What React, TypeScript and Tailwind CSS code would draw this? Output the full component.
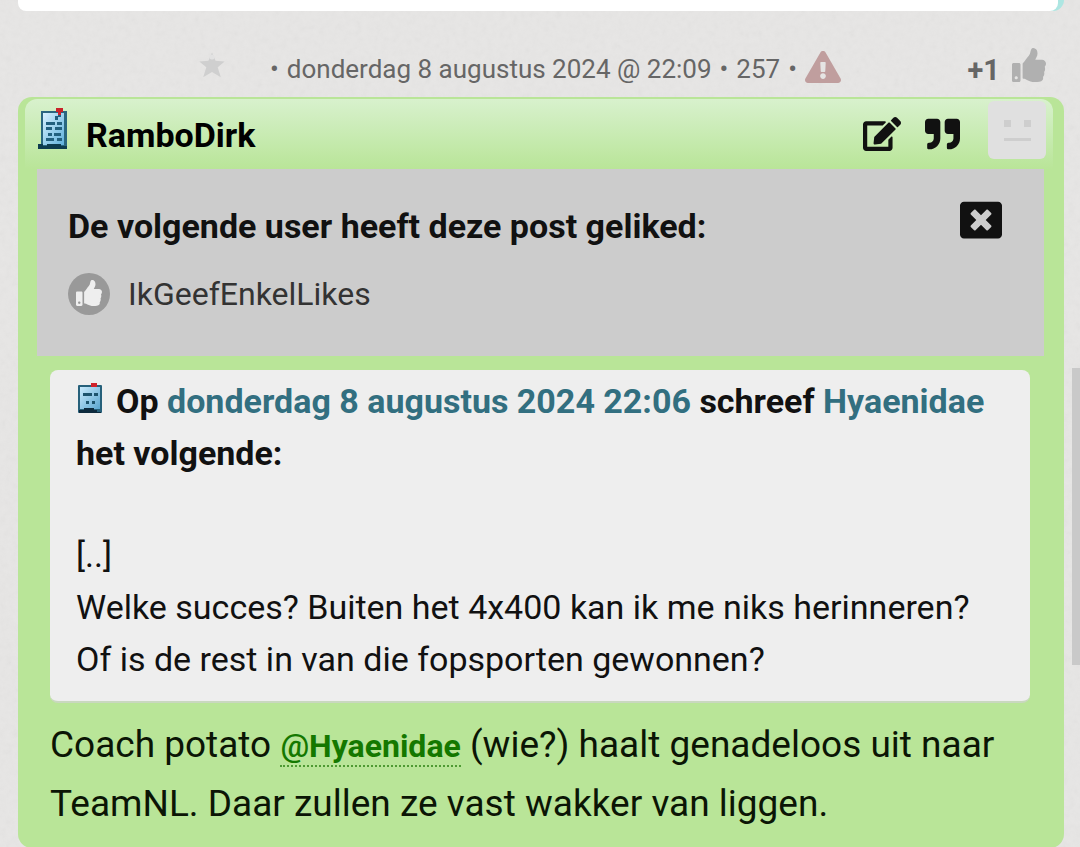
import type { ReactNode } from "react";
import {
  FaEdit,
  FaExclamationTriangle,
  FaQuoteRight,
  FaThumbsUp,
  FaWindowClose,
} from "react-icons/fa";

const POST = {
  author: "RamboDirk",
  date: "donderdag 8 augustus 2024 @ 22:09",
  number: 257,
  likes: 1,
  likedBy: ["IkGeefEnkelLikes"],
};

export default function App() {
  return (
    <div className="relative isolate min-h-screen overflow-hidden bg-[#e7e6e5] font-[Roboto,sans-serif] text-[#111]">
      <PaperTexture />
      <main className="pr-4 pl-[18px]">
        <PreviousPost />
        <PostMeta />
        <article className="rounded-[14px] bg-[#b9e598] pt-[2px] pb-4">
          <PostHeader />
          <LikedBy />
          <div className="pt-[14px] pr-[34px] pl-8">
            <Quote />
            <p className="pt-[13px] text-[37px] leading-[57px] text-[#0b1505]">
              Coach potato <Mention name="Hyaenidae" /> (wie?) haalt genadeloos
              uit naar TeamNL. Daar zullen ze vast wakker van liggen.
            </p>
          </div>
        </article>
      </main>
      <div className="absolute top-[368px] right-0 h-[297px] w-2 bg-[#c9c9c9]" />
    </div>
  );
}

const PaperTexture = () => (
  <svg className="absolute inset-0 -z-10 h-full w-full opacity-[0.07]" aria-hidden="true">
    <filter id="paper">
      <feTurbulence type="fractalNoise" baseFrequency="0.16" numOctaves="3" />
      <feColorMatrix type="saturate" values="0" />
    </filter>
    <rect width="100%" height="100%" filter="url(#paper)" />
  </svg>
);

const PreviousPost = () => (
  <div className="rounded-b-[14px] bg-[#ade6e2] pr-[6px]">
    <div className="h-[11px] rounded-b-lg bg-white" />
  </div>
);

const PostMeta = () => (
  <div className="flex h-[86px] items-center pt-[30px] pr-[18px] pl-[180px] text-[26px] text-[#666]">
    <button type="button" aria-label="Bladwijzer" className="pb-2">
      <StarIcon />
    </button>
    <p className="ml-11 flex items-center gap-2 whitespace-nowrap">
      <span>•</span>
      <a href="#post">{POST.date}</a>
      <span>•</span>
      <a href="#post">{POST.number}</a>
      <span>•</span>
      <a href="#report" aria-label="Meld deze post" className="pb-1">
        <FaExclamationTriangle className="size-9 text-[#c09e9e]" />
      </a>
    </p>
    <div className="ml-auto flex items-center gap-3">
      <span className="pt-1 text-[29px] font-bold">+{POST.likes}</span>
      <button type="button" aria-label="Like" className="pb-2">
        <FaThumbsUp className="size-[34px] text-[#b0b0b0]" />
      </button>
    </div>
  </div>
);

const PostHeader = () => (
  <header className="mr-[11px] ml-[7px] flex h-[70px] rounded-t-[12px] bg-linear-to-b from-[#d8f1cd] to-[#b9e598] pr-[7px] pl-3">
    <div className="pt-2">
      <NoteIcon className="h-11 w-8" />
    </div>
    <h2 className="ml-[17px] pt-[14px] text-[34px] leading-[44px] font-bold text-black">
      {POST.author}
    </h2>
    <div className="ml-auto flex items-start">
      <button type="button" aria-label="Bewerk" className="pt-[18px]">
        <FaEdit className="h-[34px] w-[38px]" />
      </button>
      <button type="button" aria-label="Quote" className="ml-6 pt-[17px]">
        <FaQuoteRight className="h-9 w-[35px]" />
      </button>
      <button type="button" aria-label="Negeer" className="ml-7 pt-[2px]">
        <NeutralFace />
      </button>
    </div>
  </header>
);

const LikedBy = () => (
  <section className="mr-5 ml-[19px] bg-[#ccc] pt-[34px] pr-[42px] pb-[41px] pl-[31px]">
    <div className="flex items-start justify-between">
      <h3 className="text-[34px] leading-[46px] font-bold">
        De volgende user heeft deze post geliked:
      </h3>
      <button type="button" aria-label="Sluiten" className="-mt-1">
        <FaWindowClose className="size-[42px]" />
      </button>
    </div>
    <ul className="pt-6">
      {POST.likedBy.map((user) => (
        <li key={user} className="flex items-center gap-[18px]">
          <span className="flex size-[42px] items-center justify-center rounded-full bg-[#999] pb-[2px]">
            <FaThumbsUp className="size-[26px] text-[#eee]" />
          </span>
          <a href="#user" className="text-[32px] leading-[42px] text-[#333]">
            {user}
          </a>
        </li>
      ))}
    </ul>
  </section>
);

const Quote = () => (
  <blockquote className="rounded-lg border-b-2 border-[#c9d8bf] bg-[#eee] pt-[5px] pr-6 pb-4 pl-[26px] text-[34px] leading-[52px]">
    <p className="font-bold">
      <NoteIcon className="mr-3 mb-3 inline-block h-8 w-7" short />
      Op <QuoteLink>donderdag 8 augustus 2024 22:06</QuoteLink> schreef{" "}
      <QuoteLink>Hyaenidae</QuoteLink> het volgende:
    </p>
    <p className="pt-[50px]">
      [..]
      <br />
      Welke succes? Buiten het 4x400 kan ik me niks herinneren?
      <br />
      Of is de rest in van die fopsporten gewonnen?
    </p>
  </blockquote>
);

const QuoteLink = ({ children }: { children: ReactNode }) => (
  <a href="#quote" className="text-[#326f80]">
    {children}
  </a>
);

const Mention = ({ name }: { name: string }) => (
  <a
    href="#user"
    className="border-b-2 border-dotted border-[#4f9a34] text-[32px] font-bold text-[#147800]"
  >
    <span className="font-medium">@</span>
    {name}
  </a>
);

const StarIcon = () => (
  <svg viewBox="0 0 28 28" className="size-7">
    <path
      d="M14 1.5l3.6 8.3 9.1.6-7 5.9 3.1 10-8.8-5.4-8.8 5.4 3.1-10-7-5.9 9.1-.6z"
      fill="#cfcfcf"
    />
    <circle cx="14" cy="6" r="2.5" fill="#e2e2e2" />
  </svg>
);

// Pixel note with a red pin, the short version is cut off below the second row
const NoteIcon = ({ className, short }: { className: string; short?: boolean }) =>
  short ? (
    <svg viewBox="0 0 28 32" preserveAspectRatio="none" className={className}>
      <defs>
        <linearGradient id="note-short" x1="0" y1="0" x2="1" y2="1">
          <stop offset="0" stopColor="#c9eafc" />
          <stop offset="1" stopColor="#5aa6cf" />
        </linearGradient>
        <filter id="soft-short">
          <feGaussianBlur stdDeviation="0.7" />
        </filter>
      </defs>
      <g filter="url(#soft-short)">
        <rect x="2" y="3" width="24" height="28" rx="1" fill="#28607a" />
        <rect x="4" y="5" width="20" height="22" fill="url(#note-short)" />
        <path d="M7 11h9v3H7zM18 11h4v3h-4zM10 19h3v3h-3zM16 19h3v3h-3z" fill="#1f526c" />
        <path d="M3 28h5v-2h10v2h3v2h4v1H3z" fill="#0b2a3c" />
        <path d="M15 1h6v4h-6z" fill="#d0202a" />
      </g>
    </svg>
  ) : (
    <svg viewBox="0 0 32 44" preserveAspectRatio="none" className={className}>
      <defs>
        <linearGradient id="note-full" x1="0" y1="0" x2="1" y2="1">
          <stop offset="0" stopColor="#d8f1ff" />
          <stop offset="1" stopColor="#5fb0dc" />
        </linearGradient>
        <filter id="soft-full">
          <feGaussianBlur stdDeviation="0.7" />
        </filter>
      </defs>
      <g filter="url(#soft-full)">
        <path d="M4 4h26v38H4z" fill="#2b6680" />
        <path d="M6 6h21v32H6z" fill="url(#note-full)" />
        <path
          d="M18 9h3V7h3v3h-3v3h-3zM9 15h9v3H9zM20 15h5v3h-5zM9 20h6v3H9zM18 20h7v3h-7zM11 26h4v3h-4zM17 26h7v3h-7zM9 31h8v3H9zM20 31h5v3h-5z"
          fill="#24617f"
        />
        <path d="M1 37h5v2h4v-2h14v2h6v3H1z" fill="#0d3b50" />
        <path d="M19 1h7v4h-2v3h-3V5h-2z" fill="#c8242b" />
      </g>
    </svg>
  );

const NeutralFace = () => (
  <svg viewBox="0 0 58 58" className="size-[58px]">
    <rect width="58" height="58" rx="6" fill="#e0e0e0" />
    <path d="M16 19h7v7h-7zM36 19h7v7h-7zM16 37h27v3H16z" fill="#cecece" />
  </svg>
);
